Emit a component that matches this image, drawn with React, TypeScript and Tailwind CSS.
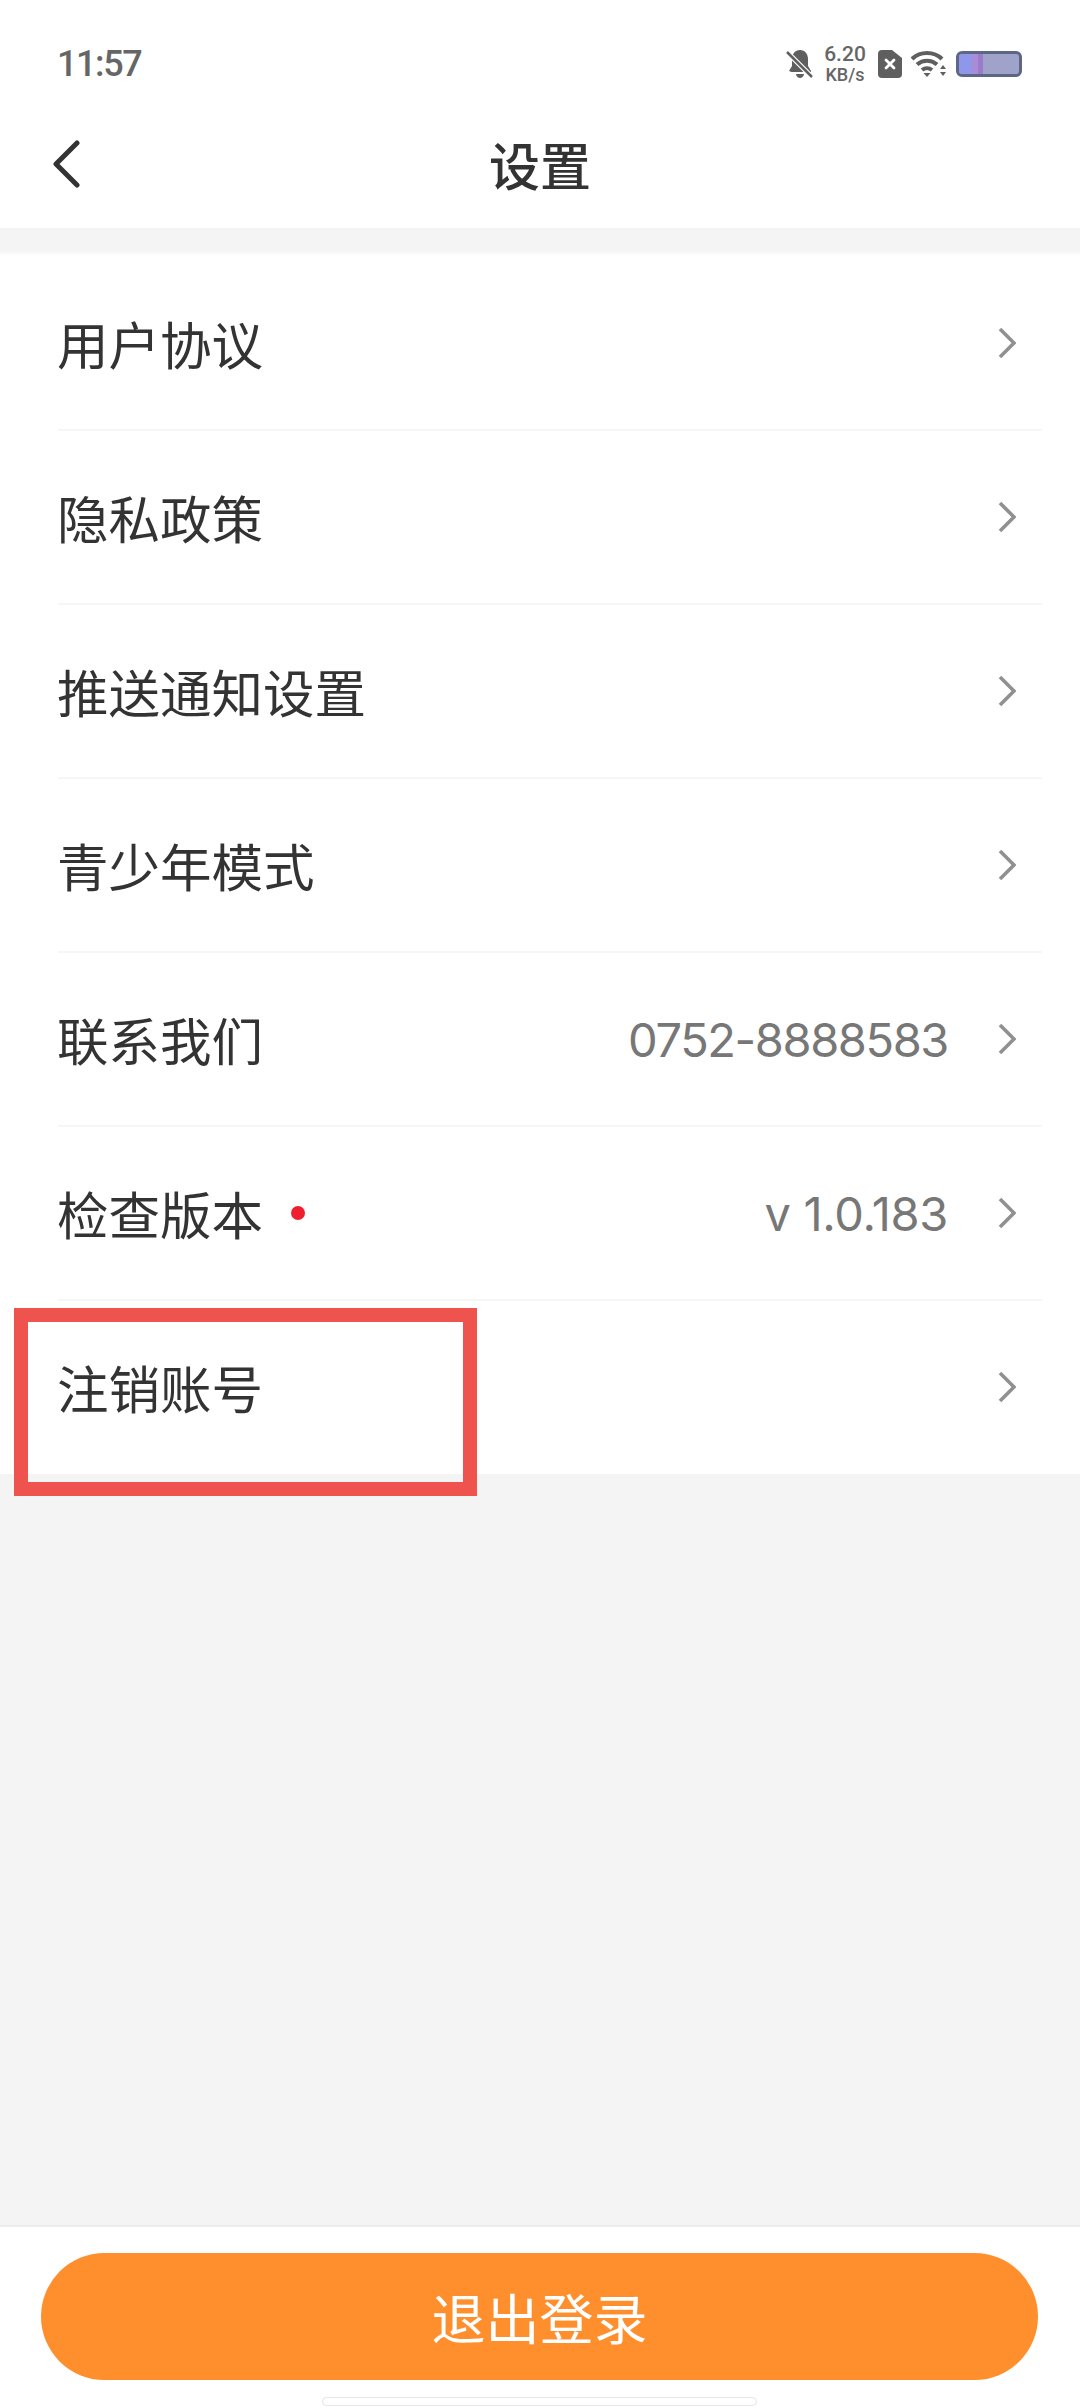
const cjk = "font-['Noto_Sans_CJK_SC','Noto_Sans',sans-serif]";

type Row = { label: string; value?: string; valueClass?: string; dot?: boolean };

const rows: Row[] = [
  { label: "用户协议" },
  { label: "隐私政策" },
  { label: "推送通知设置" },
  { label: "青少年模式" },
  { label: "联系我们", value: "0752-8888583", valueClass: "tracking-[-1.4px]" },
  { label: "检查版本", value: "v 1.0.183", valueClass: "tracking-[-0.3px]", dot: true },
  { label: "注销账号" },
];

function StatusIcons() {
  return (
    <div className="flex items-center">
      <svg width="28" height="30" viewBox="0 0 28 30">
        <path d="M14 1c5 0 8 4 8 9v7l3 5v1H5.500L3 22l3-5v-7c0-5 3-9 8-9z" fill="#5f5f5f" />
        <path d="M10 25h8c0 2-2 4-4 4s-4-2-4-4z" fill="#5f5f5f" />
        <path d="M1 3l25 25" stroke="#fff" strokeWidth="5" />
        <path d="M1 3l25 25" stroke="#5f5f5f" strokeWidth="2.500" />
      </svg>
      <div className="ml-[8px] flex w-[46px] flex-col items-center font-['Roboto',sans-serif] font-medium text-[#666]">
        <span className="text-[21px] leading-[21px]">6.20</span>
        <span className="text-[18px] leading-[19px]">KB/s</span>
      </div>
      <svg width="24" height="28" viewBox="0 0 24 28" className="ml-[10px]">
        <path d="M4 0h10l10 8v16a4 4 0 0 1-4 4H4a4 4 0 0 1-4-4V4a4 4 0 0 1 4-4z" fill="#5f5f5f" />
        <path d="M8 10l8 8M16 10l-8 8" stroke="#fff" strokeWidth="2.800" strokeLinecap="round" />
      </svg>
      <svg width="36" height="28" viewBox="0 0 36 28" className="ml-[9px]">
        <path d="M1 9C9 1 23 1 31 9" stroke="#5f5f5f" strokeWidth="4.200" fill="none" />
        <path d="M6 14.500c6-5 14-5 20 0" stroke="#5f5f5f" strokeWidth="4.200" fill="none" />
        <path d="M11 20c3-2.500 7-2.500 10 0" stroke="#5f5f5f" strokeWidth="3.800" fill="none" />
        <path d="M12.500 23h7L16 27z" fill="#5f5f5f" />
        <path d="M32 15l3 4h-6zM29 22h6l-3 4z" fill="#5f5f5f" />
      </svg>
      <div className="ml-[9px] flex h-[26px] w-[66px] overflow-hidden rounded-[6px] border-[3px] border-[#5d6785] bg-[#9fa3c9]">
        <div className="w-[13px] bg-[#8f97e8]" />
        <div className="w-[6px] bg-[#a98bd8]" />
        <div className="w-[5px] bg-[#9a7cc8]" />
      </div>
    </div>
  );
}

function Chevron() {
  return (
    <svg width="18" height="32" viewBox="0 0 18 32" className="ml-[50px] shrink-0">
      <path d="M2 2l14 14L2 30" stroke="#909090" strokeWidth="3.600" fill="none" />
    </svg>
  );
}

export default function App() {
  return (
    <div className={`relative flex h-[2408px] w-[1080px] flex-col overflow-hidden bg-[#f4f4f4] ${cjk}`}>
      <div className="bg-white">
        <div className="flex h-[100px] items-center justify-between pl-[57px] pr-[58px] pt-[27px]">
          <span className="font-['Roboto',sans-serif] text-[36px] font-medium tracking-[-1.4px] text-[#666]">11:57</span>
          <StatusIcons />
        </div>
        <div className="relative flex h-[128px] items-center justify-center">
          <svg width="30" height="48" viewBox="0 0 30 48" className="absolute left-[51px] top-[40px]">
            <path d="M26 3L5 24l21 21" stroke="#333" strokeWidth="5" fill="none" strokeLinecap="round" strokeLinejoin="round" />
          </svg>
          <span className="text-[51px] font-medium text-[#333]">设置</span>
        </div>
      </div>

      <div className="mt-[22px] h-[6px] bg-gradient-to-b from-[#f4f4f4] to-white" />
      <div className="bg-white">
        {rows.map((row) => (
          <div key={row.label} className="flex h-[174px] items-center pl-[57px] pr-[64px]">
            <div className="flex h-full flex-1 items-center">
              <span className="text-[51.500px] text-[#333]">{row.label}</span>
              {row.dot && <span className="ml-[28px] h-[14px] w-[14px] rounded-full bg-[#ee2030]" />}
            </div>
            {row.value && (
              <span className={`font-['Inter',sans-serif] pt-[2px] text-[47px] text-[#777] ${row.valueClass}`}>
                {row.value}
              </span>
            )}
            <Chevron />
          </div>
        ))}
      </div>

      {/* separators sit over the rows */}
      {rows.slice(0, -1).map((row, i) => (
        <div
          key={row.label}
          className="absolute left-[58px] right-[38px] h-[2px] bg-[#f6f6f6]"
          style={{ top: 429 + i * 174 }}
        />
      ))}

      <div className="absolute left-[14px] top-[1308px] h-[188px] w-[463px] border-[14px] border-[#ee534e]" />

      <div className="relative mt-auto h-[183px] border-t-2 border-[#ececec] bg-white">
        <button
          type="button"
          className="absolute left-[41px] top-[26px] flex h-[127px] w-[997px] items-center justify-center rounded-full bg-[#ff8f2d] text-[54px] text-white"
        >
          退出登录
        </button>
        <div className="absolute bottom-[2px] left-[322px] h-[9px] w-[435px] rounded-full border border-[#e2e4e6] bg-white" />
      </div>
    </div>
  );
}
